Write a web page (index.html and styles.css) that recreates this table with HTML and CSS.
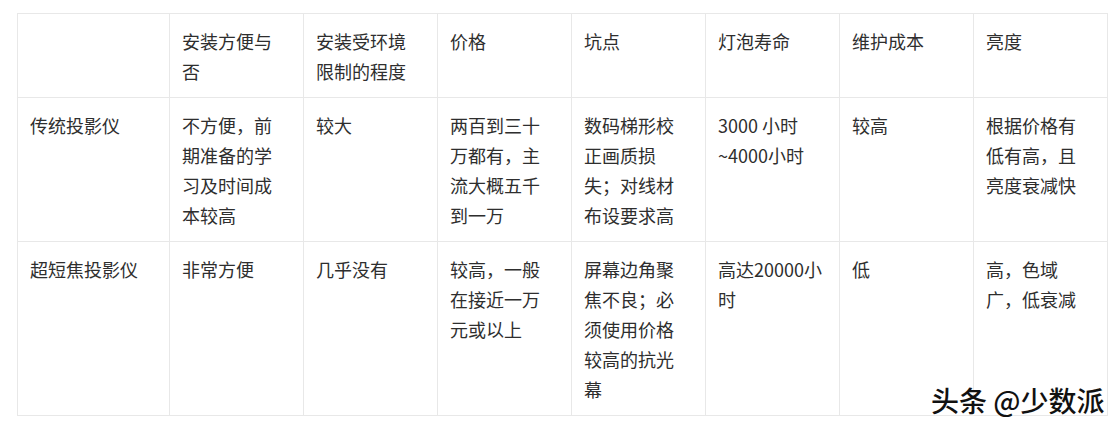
FILE: index.html
```html
<!DOCTYPE html>
<html lang="zh-CN">
<head>
<meta charset="utf-8">
<link rel="stylesheet" href="styles.css">
</head>
<body>
<div class="page">
  <table class="cmp">
    <colgroup>
      <col class="c-first">
      <col class="c">
      <col class="c">
      <col class="c">
      <col class="c">
      <col class="c">
      <col class="c">
      <col class="c">
    </colgroup>
    <tr>
      <td></td>
      <td>安装方便与否</td>
      <td>安装受环境限制的程度</td>
      <td>价格</td>
      <td>坑点</td>
      <td>灯泡寿命</td>
      <td>维护成本</td>
      <td>亮度</td>
    </tr>
    <tr>
      <td>传统投影仪</td>
      <td>不方便，前期准备的学习及时间成本较高</td>
      <td>较大</td>
      <td>两百到三十万都有，主流大概五千到一万</td>
      <td>数码梯形校正画质损失；对线材布设要求高</td>
      <td>3000 小时~4000小时</td>
      <td>较高</td>
      <td>根据价格有低有高，且亮度衰减快</td>
    </tr>
    <tr>
      <td>超短焦投影仪</td>
      <td>非常方便</td>
      <td>几乎没有</td>
      <td>较高，一般在接近一万元或以上</td>
      <td>屏幕边角聚焦不良；必须使用价格较高的抗光幕</td>
      <td>高达20000小时</td>
      <td>低</td>
      <td>高，色域广，低衰减</td>
    </tr>
  </table>
  <div class="mark">头条 @少数派</div>
</div>
</body>
</html>
```
FILE: styles.css
```css
html, body {
  margin: 0;
  padding: 0;
  background: #ffffff;
}
.page {
  position: relative;
  width: 1120px;
  height: 430px;
  padding: 13px 0 0 17px;
  box-sizing: border-box;
  font-family: "Noto Sans CJK SC", "Noto Sans", sans-serif;
  color: #2e2e2e;
}
.cmp {
  border-collapse: collapse;
  table-layout: fixed;
  width: 1089px;
}
.c-first { width: 152px; }
.c { width: 134px; }
.cmp td {
  border: 1px solid #e8e8e8;
  padding: 12px 14px 11px 12px;
  font-size: 18px;
  line-height: 30px;
  vertical-align: top;
  word-break: normal;
}
.mark {
  position: absolute;
  left: 931px;
  top: 386px;
  font-size: 28px;
  line-height: 28px;
  font-weight: 500;
  color: #111111;
  white-space: nowrap;
  text-shadow: 1px 1px 0 #fff, -1px 0 0 #fff;
}
```
